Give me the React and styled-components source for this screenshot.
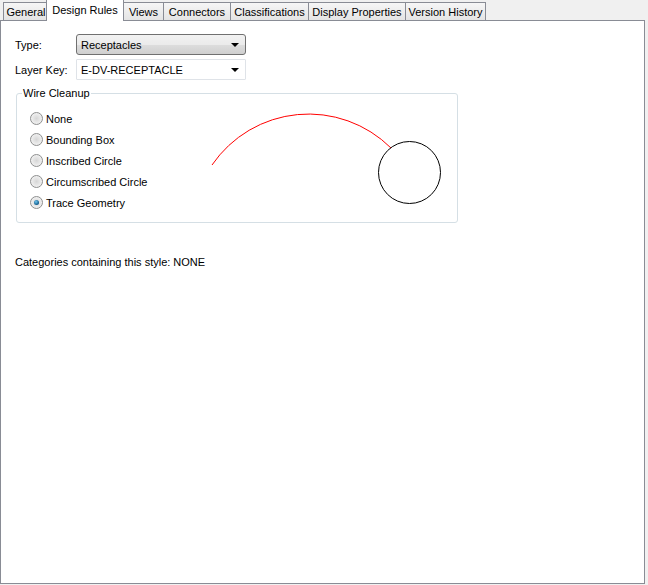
import React from 'react';
import styled, { createGlobalStyle, css } from 'styled-components';

const Global = createGlobalStyle`
  html, body { margin: 0; padding: 0; background: #f0f0f0; }
  body { font-family: Tahoma, "Liberation Sans", Arial, sans-serif; font-size: 11px; color: #000; }
`;

const tabs = [
	{ label: 'General', w: 46 },
	{ label: 'Design Rules', w: 78, active: true },
	{ label: 'Views', w: 41 },
	{ label: 'Connectors', w: 68 },
	{ label: 'Classifications', w: 79 },
	{ label: 'Display Properties', w: 98 },
	{ label: 'Version History', w: 81 },
];

const options = ['None', 'Bounding Box', 'Inscribed Circle', 'Circumscribed Circle', 'Trace Geometry'];

function App() {
	return (
		<>
			<Global />
			<Window>
				<TabStrip>
					{tabs.map((t) => (
						<Tab key={t.label} active={t.active} style={{ width: t.w }}>
							{t.label}
						</Tab>
					))}
				</TabStrip>
				<Panel>
					<FieldRow>
						<Label>Type:</Label>
						<Combo button>
							<span>Receptacles</span>
							<Arrow />
						</Combo>
					</FieldRow>
					<FieldRow>
						<Label>Layer Key:</Label>
						<Combo>
							<span>E-DV-RECEPTACLE</span>
							<Arrow />
						</Combo>
					</FieldRow>
					<Group>
						<Legend>Wire Cleanup</Legend>
						<GroupBody>
							<RadioList>
								{options.map((o) => (
									<RadioRow key={o}>
										<Radio checked={o === 'Trace Geometry'} />
										<span>{o}</span>
									</RadioRow>
								))}
							</RadioList>
							<Sketch width='250' height='120' viewBox='200 100 250 120'>
								<path d='M 212 165 A 117 117 0 0 1 391 148' fill='none' stroke='#ff0000' strokeWidth='1' />
								<circle cx='409.5' cy='172.5' r='31' fill='none' stroke='#000' strokeWidth='1' />
							</Sketch>
						</GroupBody>
					</Group>
					<Note>Categories containing this style: NONE</Note>
				</Panel>
			</Window>
		</>
	);
}

export default App;

const Window = styled.div`
	width: 648px;
	height: 585px;
	display: flex;
	flex-direction: column;
`;

const TabStrip = styled.div`
	display: flex;
	align-items: flex-end;
	height: 20px;
	padding-left: 3px;
	position: relative;
	z-index: 1;
`;

const Tab = styled.div`
	box-sizing: border-box;
	height: 18px;
	border: 1px solid #898c95;
	border-bottom: none;
	margin-right: -1px;
	background: linear-gradient(#f6f6f6, #e4e4e4);
	display: flex;
	align-items: center;
	justify-content: center;
	white-space: nowrap;
	padding-top: 1px;
	${({ active }) =>
		active &&
		css`
			height: 22px;
			margin: 0 -1px -1px -2px;
			background: #fff;
			position: relative;
			z-index: 2;
			padding: 0 0 2px;
		`}
`;

const Panel = styled.div`
	box-sizing: border-box;
	width: 645px;
	height: 564px;
	background: #fff;
	border: 1px solid #898c95;
	padding: 13px 0 0 14px;
	display: flex;
	flex-direction: column;
`;

const FieldRow = styled.div`
	display: flex;
	align-items: center;
	height: 21px;
	margin-bottom: 4px;
`;

const Label = styled.span`
	width: 61px;
`;

const Combo = styled.div`
	box-sizing: border-box;
	width: 170px;
	height: 21px;
	display: flex;
	align-items: center;
	justify-content: space-between;
	padding: 0 4px 0 4px;
	border: 1px solid #dfe3e8;
	background: #fff;
	border-radius: 1px;
	${({ button }) =>
		button &&
		css`
			border: 1px solid #707070;
			border-radius: 3px;
			background: linear-gradient(#f2f2f2 0%, #ebebeb 50%, #dddddd 51%, #cfcfcf 100%);
		`}
`;

const Arrow = styled.span`
	width: 0;
	height: 0;
	border-left: 4px solid transparent;
	border-right: 4px solid transparent;
	border-top: 4px solid #000;
	margin-right: 2px;
`;

const Group = styled.fieldset`
	box-sizing: border-box;
	width: 442px;
	height: 136px;
	margin: 3px 0 0 1px;
	padding: 0 0 0 13px;
	border: 1px solid #d5dfe5;
	border-radius: 3px;
`;

const Legend = styled.legend`
	padding: 0 1px;
	margin-left: -8px;
	font-size: 11px;
`;

const GroupBody = styled.div`
	display: flex;
`;

const RadioList = styled.div`
	display: flex;
	flex-direction: column;
	gap: 8px;
	width: 170px;
	padding-top: 13px;
`;

const RadioRow = styled.label`
	display: flex;
	align-items: center;
	gap: 3px;
	height: 13px;
`;

const Radio = styled.span`
	box-sizing: border-box;
	width: 13px;
	height: 13px;
	border-radius: 50%;
	border: 1px solid #8e8f8f;
	background: radial-gradient(circle at 50% 50%, #d6d6d6 0%, #ececec 60%, #f8f8f8 100%);
	display: flex;
	align-items: center;
	justify-content: center;
	&::after {
		content: '';
		width: 5px;
		height: 5px;
		border-radius: 50%;
		background: ${({ checked }) => (checked ? 'radial-gradient(circle at 40% 35%, #6fc3ec, #0f5c8c 70%, #0b3d66)' : 'transparent')};
	}
`;

const Sketch = styled.svg`
	display: block;
	margin-top: 1px;
`;

const Note = styled.div`
	margin-top: 33px;
	margin-left: 0px;
`;
